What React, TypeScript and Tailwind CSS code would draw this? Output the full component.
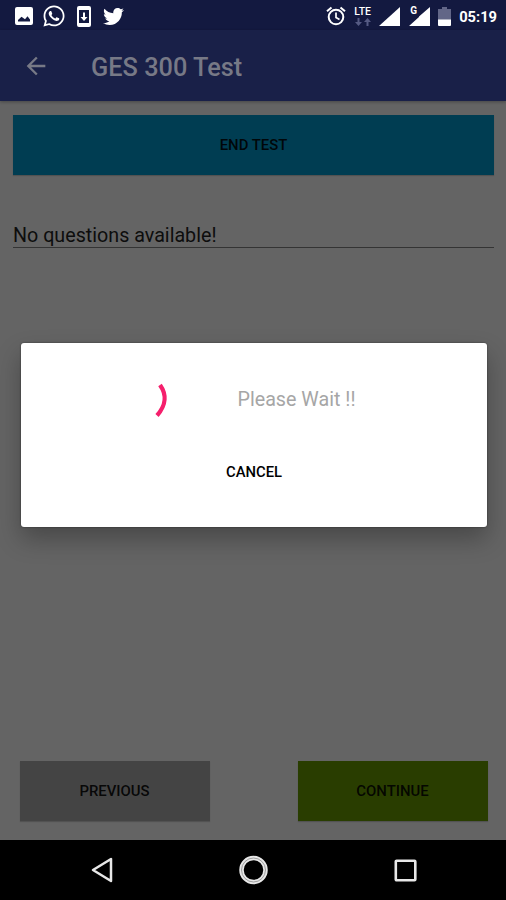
import type { ReactNode } from "react";
import { MdArrowBack } from "react-icons/md";
import { FaTwitter, FaWhatsapp } from "react-icons/fa";

function StatusBar() {
  return (
    <header className="flex h-[30px] shrink-0 items-center justify-between bg-[#131940] pt-[2px] pr-[9px] pl-[15px] text-white">
      <div className="flex items-center">
        <svg className="size-[18px]" viewBox="0 0 18 18">
          <path
            fill="currentColor"
            fillRule="evenodd"
            d="M2 0h14q2 0 2 2v14q0 2-2 2H2q-2 0-2-2V2q0-2 2-2zM3 14.500h12v-2l-2.500-3.200-2.500 3-3.500-2.500L3 13z"
          />
        </svg>
        <FaWhatsapp className="ml-[9px] size-[24px]" />
        <svg className="ml-[11px] h-[21px] w-[14px]" viewBox="0 0 14 21">
          <path
            fill="currentColor"
            fillRule="evenodd"
            d="M2 0h10q2 0 2 2v17q0 2-2 2H2q-2 0-2-2V2q0-2 2-2zM2 4v13h10V4zM6 6.500h2v4.500h2.500L7 15l-3.500-4H6z"
          />
        </svg>
        <FaTwitter className="ml-[12px] size-[21px]" />
      </div>
      <div className="flex items-center">
        <svg
          className="size-[20px]"
          viewBox="0 0 20 20"
          fill="none"
          stroke="currentColor"
          strokeWidth="2"
        >
          <circle cx="10" cy="11" r="7.300" />
          <path d="M1 5.300 5.500 1.500M19 5.300 14.500 1.500" />
          <path d="M10 6.500v5l3.500 2" strokeWidth="1.700" />
        </svg>
        <div className="ml-[7px] flex w-[19px] flex-col items-center">
          <span className="text-[10.500px] leading-[10px] font-medium">LTE</span>
          <svg className="mt-[1px] h-[8px] w-[16px] text-[#555a83]" viewBox="0 0 16 8">
            <path fill="currentColor" d="M2.500 0h2v4h2.500L3.500 8 0 4h2.500zM11.500 8h2V4H16l-3.500-4L9 4h2.500z" />
          </svg>
        </div>
        <svg className="ml-[7px] h-[19px] w-[21px]" viewBox="0 0 21 19">
          <path fill="currentColor" d="M21 0v19H0z" />
        </svg>
        <div className="relative ml-[9px] h-[19px] w-[21px]">
          <svg className="h-[19px] w-[21px]" viewBox="0 0 21 19">
            <path fill="currentColor" d="M21 0v19H0L10 10V9.500z" />
          </svg>
          <span className="absolute -top-[1px] left-[1px] bg-[#131940] pr-px text-[10px] leading-[10px] font-bold">G</span>
        </div>
        <svg className="ml-[8px] h-[19px] w-[13px]" viewBox="0 0 13 19">
          <path fill="#626687" d="M4 0h5v2h4v11H0V2h4z" />
          <path fill="currentColor" d="M0 12.500h13V18q0 1-1 1H1q-1 0-1-1z" />
        </svg>
        <span className="ml-[8px] pt-[2px] text-[14.700px] leading-[18px] font-bold">05:19</span>
      </div>
    </header>
  );
}

function RaisedButton({ className, children }: { className: string; children: ReactNode }) {
  return (
    <button
      className={`h-[60px] pt-px text-[14.900px] leading-[21px] font-medium text-black/90 shadow-[0_1px_1px_rgba(0,0,0,0.18)] ${className}`}
    >
      {children}
    </button>
  );
}

function NavigationBar() {
  return (
    <nav className="flex h-[60px] shrink-0 items-center justify-between bg-black pr-[88px] pl-[90px] text-[#e8e8e8]">
      <svg className="size-[26px]" viewBox="0 0 26 26" fill="none" stroke="currentColor">
        <path d="M21 2v22L3 13z" strokeWidth="2.500" strokeLinejoin="round" />
      </svg>
      <svg className="size-[30px]" viewBox="0 0 30 30" fill="none" stroke="currentColor">
        <circle cx="14.500" cy="15" r="12" strokeWidth="4.500" />
        <circle cx="14.500" cy="15" r="12" stroke="#8a8a8a" strokeWidth="0.800" />
      </svg>
      <svg className="size-[26px]" viewBox="0 0 26 26" fill="none" stroke="currentColor">
        <rect x="3.800" y="3.800" width="19.500" height="19.500" rx="0.800" strokeWidth="2.600" />
      </svg>
    </nav>
  );
}

function WaitDialog() {
  return (
    <section
      role="dialog"
      className="absolute top-[343px] left-[21px] flex h-[184px] w-[466px] flex-col rounded-[3px] bg-white shadow-[0_12px_24px_rgba(0,0,0,0.28),0_0_2px_rgba(0,0,0,0.5)]"
    >
      <div className="flex h-[114px] items-center">
        <svg className="ml-[113px] h-[42px] w-[42px]" viewBox="0 0 42 42" fill="none">
          <path d="M26 6C32.500 15 32.500 26 23 36.500" stroke="#f51f6c" strokeWidth="4.300" />
        </svg>
        <span className="ml-[61.500px] text-[19.700px] leading-6 whitespace-nowrap text-[#a6a6a6]">Please Wait !!</span>
      </div>
      <button className="mt-[5px] h-5 self-center text-[14.800px] leading-5 font-medium text-black">CANCEL</button>
    </section>
  );
}

export default function App() {
  return (
    <div className="relative flex h-[900px] w-[506px] flex-col overflow-hidden bg-[#646464] font-[Roboto,sans-serif]">
      <StatusBar />
      <div className="flex h-[71px] shrink-0 items-center bg-[#192048] pt-[3px] pl-[22px] text-[#777986] shadow-[0_1px_3px_rgba(0,0,0,0.3)]">
        <MdArrowBack className="mb-[2px] size-[28px]" />
        <h1 className="ml-[41px] pt-[2px] text-[25.300px] leading-8 font-medium">GES 300 Test</h1>
      </div>
      <main className="flex flex-1 flex-col pt-[14px] pr-[12px] pl-[13px]">
        <RaisedButton className="bg-[#003d52]">END TEST</RaisedButton>
        <div className="mt-[46px] h-[27px] border-b border-[#343434] pt-px text-[19.700px] leading-[27px] text-[#0d0d0d]">
          No questions available!
        </div>
        <div className="mt-auto mb-[19px] flex justify-between px-[6.500px]">
          <RaisedButton className="w-[190px] bg-[#444444]">PREVIOUS</RaisedButton>
          <RaisedButton className="w-[190px] bg-[#293d00]">CONTINUE</RaisedButton>
        </div>
      </main>
      <NavigationBar />
      <WaitDialog />
    </div>
  );
}
